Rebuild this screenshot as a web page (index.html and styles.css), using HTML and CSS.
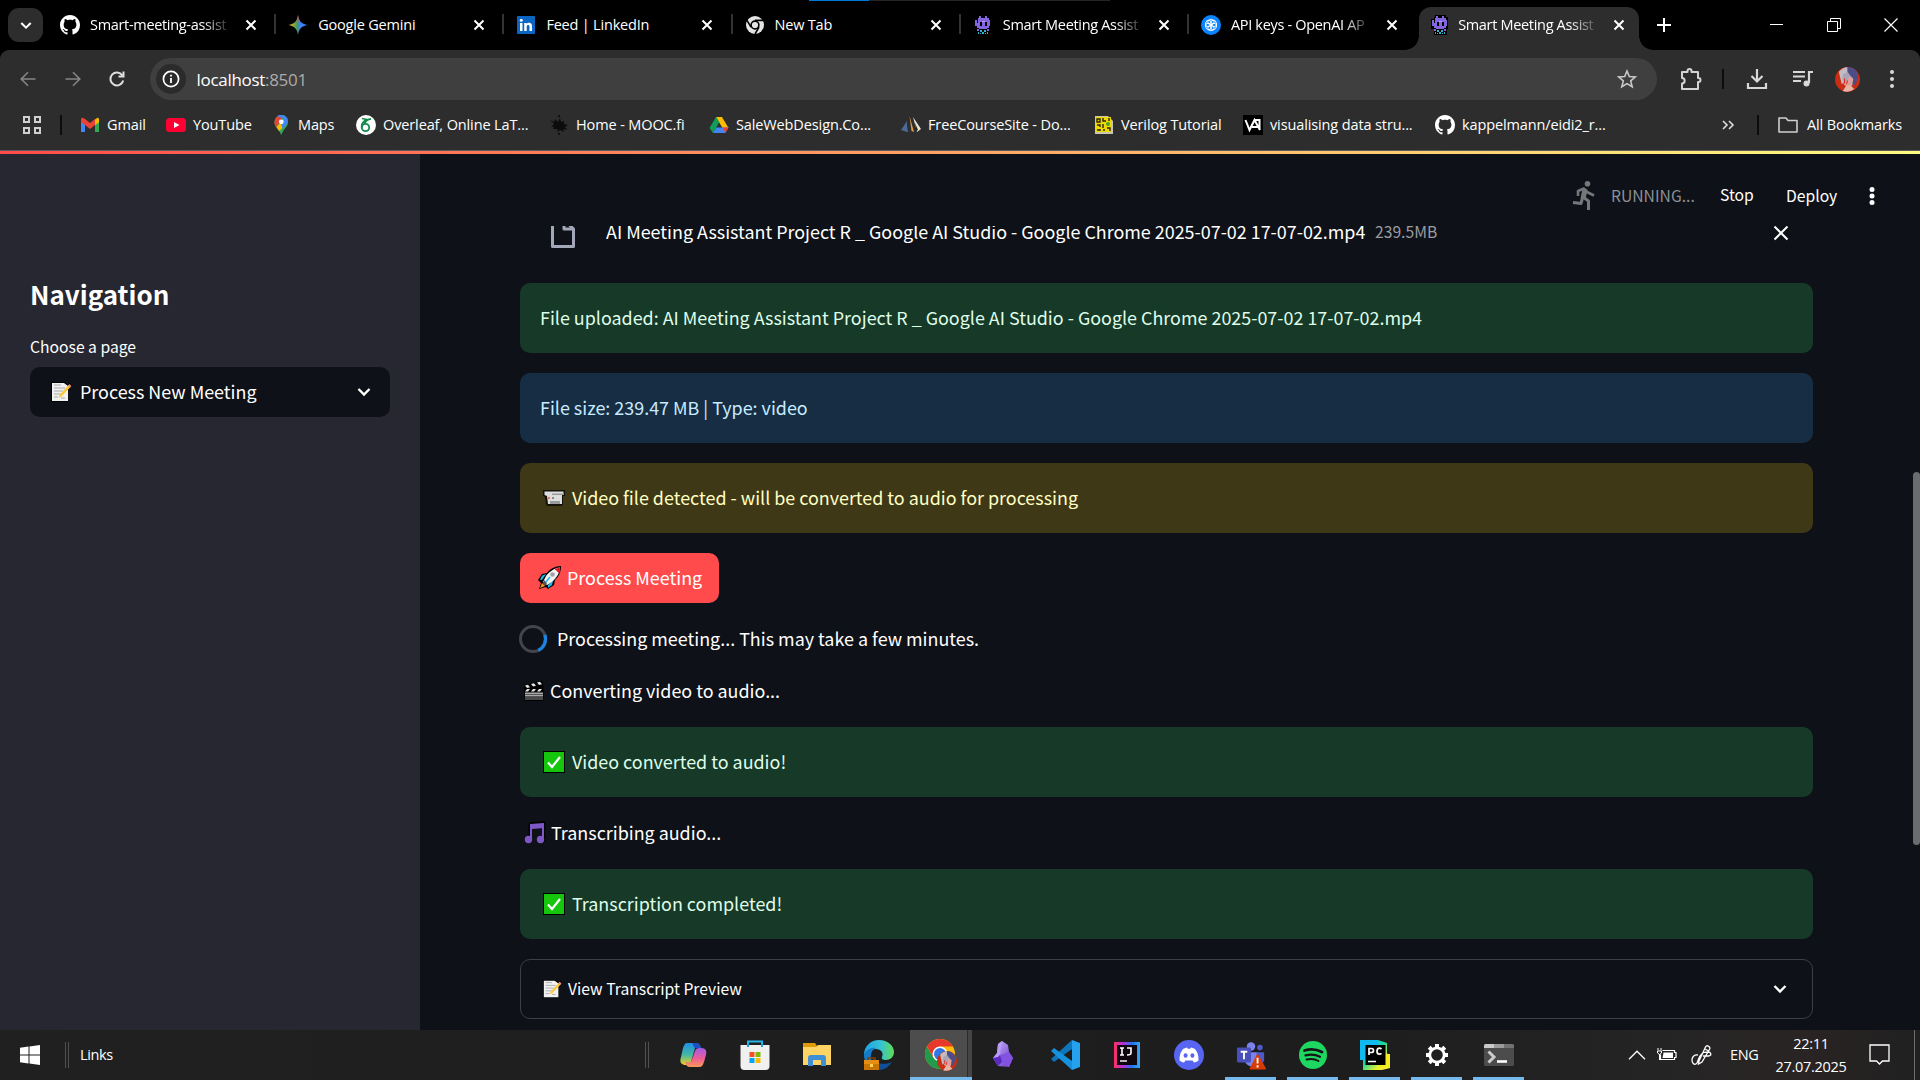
FILE: index.html
```html
<!DOCTYPE html>
<html lang="en">
<head>
<meta charset="utf-8">
<title>Smart Meeting Assistant</title>
<link rel="stylesheet" href="styles.css">
</head>
<body>
<svg class="defs" aria-hidden="true">
  <defs>
    <symbol id="x" viewBox="0 0 12 12"><path d="M1.5 1.5l9 9M10.5 1.5l-9 9" stroke="currentColor" stroke-width="2" fill="none"/></symbol>
    <symbol id="chev" viewBox="0 0 14 10"><path d="M1.5 2l5.500 5.500L12.500 2" stroke="currentColor" stroke-width="2.400" fill="none"/></symbol>
    <symbol id="github" viewBox="0 0 16 16"><path fill="#fff" d="M8 0C3.580 0 0 3.580 0 8c0 3.540 2.290 6.530 5.470 7.590.4.070.550-.170.550-.380 0-.190-.010-.820-.010-1.490-2.010.370-2.530-.490-2.690-.940-.090-.230-.480-.940-.820-1.130-.280-.150-.680-.520-.010-.530.630-.010 1.080.580 1.230.820.720 1.210 1.870.870 2.330.660.070-.520.280-.870.510-1.070-1.780-.2-3.640-.890-3.640-3.950 0-.870.310-1.590.820-2.150-.080-.2-.360-1.020.080-2.120 0 0 .670-.210 2.200.820.640-.180 1.320-.270 2-.270s1.360.090 2 .270c1.530-1.040 2.200-.820 2.200-.820.440 1.100.160 1.920.080 2.120.510.560.820 1.270.820 2.150 0 3.070-1.870 3.750-3.650 3.950.290.250.540.730.540 1.480 0 1.070-.010 1.930-.010 2.200 0 .210.150.460.550.380A8.010 8.010 0 0 0 16 8c0-4.420-3.580-8-8-8z"/></symbol>
    <symbol id="bot" viewBox="0 0 18 20" shape-rendering="crispEdges">
      <path fill="#000" d="M4 0h11v2h2v12h-1v6H3v-6H0V4h3z"/>
      <path fill="#8465e0" d="M5 1h2v2h4V1h2v2h2v2h1v6h-1v2h-2v1H5v-1H3v-2H1V5h2v3h1V3h1z"/>
      <path fill="#000" d="M6 7h2v4H6zM11 7h2v4h-2z"/>
      <path fill="#b49bf0" d="M8 6h3v1H8z"/>
      <path fill="#8465e0" d="M3 14h2v2H3zM13 14h2v2h-2z"/>
      <path fill="#2fb3cf" d="M6 15h2v2H6zM10 15h2v2h-2zM4 17h1v2H4zM8 17h2v2H8zM13 17h1v2h-1zM6 18h1v1H6zM11 18h1v1h-1z"/>
    </symbol>
    <symbol id="memo" viewBox="0 0 22 22">
      <path d="M1 1h14l3 3 2-2 2 2-4 6v11H1z" fill="#000"/>
      <path d="M2 2h12l4 3v15H2z" fill="#f1f1f1"/>
      <path d="M4 4h7M4 7h11M4 10h9M4 13h7M4 16h4M11 17h4" stroke="#aaa" stroke-width="1"/>
      <path d="M8.500 17l1-3 9-10 2 2-9 9.500z" fill="#ffc83d"/><path d="M18 4.500l1.500-1.500 2 2-1.500 1.500z" fill="#e38b8b"/>
    </symbol>
    <symbol id="check" viewBox="0 0 22 22"><path d="M0 0h22v22H0z" fill="#000"/><path d="M1 1h20v20H1z" fill="#16c60c"/><path d="M5 11.500l4 4.500L17 6" stroke="#fff" stroke-width="2.200" fill="none"/></symbol>
    <symbol id="avatar" viewBox="0 0 26 26">
      <circle cx="13" cy="13" r="13" fill="#c92e12"/><path d="M4 5a13 13 0 0 1 9-5v12l-6 6z" fill="#c2bbc2"/><path d="M13 0c7 0 11 5 11 11l-3 8-7-2z" fill="#4d4c87"/><path d="M8 10l5-3 6 5-1 7-4 3-5-4z" fill="#dca198"/><path d="M8 8l5-3 5 7-3-2-3 5-4-1z" fill="#a9a4b5"/><path d="M8 25l4-6h4l4 4a13 13 0 0 1-12 2z" fill="#e5b5aa"/><path d="M10 12v5M13 14l-1 4" stroke="#e01919"/>
    </symbol>
    <linearGradient id="gem" x1="0" x2="1"><stop offset="0" stop-color="#f9bc15"/><stop offset=".45" stop-color="#469a5b"/><stop offset=".6" stop-color="#3b83f6"/><stop offset="1" stop-color="#3186ff"/></linearGradient>
    <linearGradient id="gemTop" x1="0" y1="0" x2="0" y2="1"><stop offset="0" stop-color="#f94543"/><stop offset=".4" stop-color="#f94543" stop-opacity="0"/></linearGradient>
    <linearGradient id="copA" x1="0" y1="0" x2="0" y2="1"><stop offset="0" stop-color="#1c8fe8"/><stop offset=".55" stop-color="#46b9a0"/><stop offset="1" stop-color="#f5d21a"/></linearGradient>
    <linearGradient id="copB" x1="0" y1="0" x2="0" y2="1"><stop offset="0" stop-color="#a25be8"/><stop offset=".55" stop-color="#ee5c97"/><stop offset="1" stop-color="#fb9a54"/></linearGradient>
    <linearGradient id="edgeA" x1="0" x2="1"><stop offset="0" stop-color="#1ca4e6"/><stop offset=".55" stop-color="#35c1d4"/><stop offset="1" stop-color="#62dc54"/></linearGradient>
    <linearGradient id="obs" x1="0" y1="0" x2="1" y2="1"><stop offset="0" stop-color="#c9b2fb"/><stop offset="1" stop-color="#6734c9"/></linearGradient>
    <linearGradient id="ij" x1="0" y1="0" x2="1" y2="0"><stop offset="0" stop-color="#fe315d"/><stop offset=".35" stop-color="#b62ee0"/><stop offset=".7" stop-color="#1b77ef"/><stop offset="1" stop-color="#3aa5ee"/></linearGradient>
    <linearGradient id="pc" x1="0" y1="0" x2="1" y2="1"><stop offset="0" stop-color="#12c8ef"/><stop offset=".45" stop-color="#15d7a0"/><stop offset=".75" stop-color="#e7ee2d"/><stop offset="1" stop-color="#fcf84a"/></linearGradient>
  </defs>
</svg>

<div class="screen">
  <header class="tabs">
    <i class="loadbar"></i>
    <button class="tabsearch"><svg width="12" height="9"><use href="#chev"/></svg></button>
    <div class="tab"><svg class="fav" viewBox="0 0 16 16"><use href="#github"/></svg><span class="title fade">Smart-meeting-assist</span><svg class="close"><use href="#x"/></svg></div>
    <div class="tab"><svg class="fav" viewBox="0 0 20 20"><path d="M10 0c.8 6 3.500 9 9.500 10-6 1-8.700 4-9.500 10C9.200 14 6.500 11 .5 10 6.500 9 9.200 6 10 0z" fill="url(#gem)"/><path d="M10 0c.8 6 3.500 9 9.500 10-6 1-8.700 4-9.500 10C9.200 14 6.500 11 .5 10 6.500 9 9.200 6 10 0z" fill="url(#gemTop)"/></svg><span class="title">Google Gemini</span><svg class="close"><use href="#x"/></svg></div>
    <div class="tab"><svg class="fav" viewBox="0 0 20 20"><rect x="1" y="1" width="18" height="18" rx="1" fill="#0a66c2"/><path d="M4 8h2.500v8H4zM8.200 8h2.400v1.100c1-1.800 5.400-2 5.400 2V16h-2.500v-4.300c0-2.300-2.800-2-2.800 0V16H8.200z" fill="#fff"/><circle cx="5.250" cy="5.300" r="1.500" fill="#fff"/></svg><span class="title">Feed | LinkedIn</span><svg class="close"><use href="#x"/></svg></div>
    <div class="tab"><svg class="fav" viewBox="0 0 20 20"><circle cx="10" cy="10" r="9" fill="#e4e4e4"/><circle cx="10" cy="10" r="3.900" fill="#e4e4e4" stroke="#000" stroke-width="1.600"/><path d="M10 5.400h8.200M6 12.200L2 5.300M14 12.200L10 19" stroke="#000" stroke-width="1.600"/></svg><span class="title">New Tab</span><svg class="close"><use href="#x"/></svg></div>
    <div class="tab"><svg class="fav" viewBox="0 0 18 20"><use href="#bot"/></svg><span class="title fade">Smart Meeting Assist</span><svg class="close"><use href="#x"/></svg></div>
    <div class="tab last"><svg class="fav" viewBox="0 0 20 20"><circle cx="10" cy="10" r="10" fill="#0a84ff"/><g fill="none" stroke="#fff" stroke-width=".9"><ellipse cx="10" cy="7" rx="3.200" ry="2.700"/><ellipse cx="10" cy="7" rx="3.200" ry="2.700" transform="rotate(60 10 10)"/><ellipse cx="10" cy="7" rx="3.200" ry="2.700" transform="rotate(120 10 10)"/><ellipse cx="10" cy="7" rx="3.200" ry="2.700" transform="rotate(180 10 10)"/><ellipse cx="10" cy="7" rx="3.200" ry="2.700" transform="rotate(240 10 10)"/><ellipse cx="10" cy="7" rx="3.200" ry="2.700" transform="rotate(300 10 10)"/></g></svg><span class="title fade">API keys - OpenAI AP</span><svg class="close"><use href="#x"/></svg></div>
    <div class="tab active"><svg class="fav" viewBox="0 0 18 20"><use href="#bot"/></svg><span class="title fade">Smart Meeting Assist</span><svg class="close"><use href="#x"/></svg></div>
    <svg class="plus" viewBox="0 0 14 14"><path d="M7 0v14M0 7h14" stroke="#fff" stroke-width="2"/></svg>
    <div class="winctl">
      <svg width="14" height="14"><path d="M0 6.500h13" stroke="#fff"/></svg>
      <svg width="14" height="14"><path d="M.5 3.500h10v10H.500zM3.500 3.500V.500h10v10h-3" fill="none" stroke="#fff"/></svg>
      <svg width="14" height="14"><path d="M.5.500l13 13M13.500.500l-13 13" stroke="#fff" stroke-width="1.200"/></svg>
    </div>
  </header>

  <div class="toolbar">
    <svg class="nav dim" viewBox="0 0 16 16"><path d="M15.500 8H1.500M8 1.200L1.200 8 8 14.800"/></svg>
    <svg class="nav dim" viewBox="0 0 16 16"><path d="M.5 8h14M8 1.200L14.800 8 8 14.800"/></svg>
    <svg class="nav" viewBox="0 0 16 16"><path d="M14.200 9.500a6.500 6.500 0 1 1-.9-5.200M14.500.5v5H9.500" /></svg>
    <div class="omnibox">
      <span class="info"><svg width="18" height="18"><circle cx="9" cy="9" r="7.600" fill="none" stroke="#fff" stroke-width="1.700"/><path d="M9 8v5M9 4.800v1.800" stroke="#fff" stroke-width="1.800"/></svg></span>
      <span class="url">localhost<b>:8501</b></span>
      <svg class="star" viewBox="0 0 20 20"><path d="M10 2l2.300 5.500 6 .5-4.600 3.900 1.500 5.900L10 14.600l-5.200 3.200 1.500-5.900L1.700 8l6-.5z" fill="none" stroke="#c9c9c9" stroke-width="1.600"/></svg>
    </div>
    <div class="actions">
      <svg class="ext" viewBox="0 0 24 24"><path d="M3 5h5.500V4a2 2 0 0 1 4 0v1H19v6h.5a2 2 0 0 1 0 4H19v7H3v-5.500c3.500 0 3.500-5.500 0-5.500z" fill="none" stroke="#d4d4d4" stroke-width="2" stroke-linejoin="round"/></svg>
      <i class="bar"></i>
      <svg class="down" viewBox="0 0 22 22"><path d="M11 1v12M5.500 8l5.500 5.500L16.500 8M2 15v5h18v-5" fill="none" stroke="#d8d8d8" stroke-width="2.200"/></svg>
      <svg class="media" viewBox="0 0 20 18"><path d="M0 2h12M0 6.500h12M0 11h8M20 2h-4v11" fill="none" stroke="#d8d8d8" stroke-width="2.200"/><circle cx="13.500" cy="13.500" r="3" fill="#d8d8d8"/></svg>
      <svg class="ava" viewBox="0 0 26 26"><use href="#avatar"/></svg>
      <svg class="kebab" viewBox="0 0 6 20"><g fill="#d8d8d8"><circle cx="3" cy="3" r="2"/><circle cx="3" cy="10" r="2"/><circle cx="3" cy="17" r="2"/></g></svg>
    </div>
  </div>

  <nav class="bookmarks">
    <svg class="apps" viewBox="0 0 20 20"><path d="M2 2h5v5H2zM13 2h5v5h-5zM2 13h5v5H2zM13 13h5v5h-5z" fill="none" stroke="#d0d0d0" stroke-width="2"/></svg>
    <i class="bar"></i>
    <a class="bm b1"><svg viewBox="0 0 20 20"><path d="M1 4v13h4V9z" fill="#4285f4"/><path d="M15 9v8h4V4z" fill="#34a853"/><path d="M1 4l1-1.500 3 1.500 5 4 5-4v6l-5 4-5-4-4-3z" fill="#ea4335"/><path d="M15 4.500L18 2.500l1 1.500v3.500L15 10z" fill="#fbbc04"/></svg><span>Gmail</span></a>
    <a class="bm b2"><svg viewBox="0 0 20 20"><rect y="3" width="20" height="14" rx="3.500" fill="#ff0033"/><path d="M8 7l5.500 3L8 13z" fill="#fff"/></svg><span>YouTube</span></a>
    <a class="bm b3"><svg viewBox="0 0 20 20"><path d="M3.500 8C3 3 7 0 10.500 0c4 0 7 3.500 6.500 7.500L10 20C9 15 4 13 3.500 8z" fill="#34a853"/><path d="M3.500 8c0-4 3-8 7-8l2 1-7 11C4.300 10.500 3.500 9.500 3.500 8z" fill="#ea4335"/><path d="M5.500 12L14 3l2 6-8 7z" fill="#fbbc04"/><path d="M10.500 0c4 0 7 3.500 6.500 7.500L12 15l-2-6 3-5-7-3c1-.6 2.500-1 4.500-1z" fill="#4285f4"/><path d="M10 19.500c0-4 2-6 5-9l2-4c.3 6-5 7-7 13z" fill="#34a853"/><circle cx="10.300" cy="6.800" r="2.400" fill="#fff"/></svg><span>Maps</span></a>
    <a class="bm b4"><svg viewBox="0 0 20 20"><circle cx="10" cy="10" r="10" fill="#fff"/><circle cx="9.500" cy="12.500" r="3.700" fill="none" stroke="#138a4d" stroke-width="1.800"/><path d="M5.800 13C5 8 8 4.500 15 4c-3 .3-5.500 2.500-6.500 4.500M6 3.500l5 1" fill="none" stroke="#138a4d" stroke-width="1.700"/></svg><span>Overleaf, Online LaT...</span></a>
    <a class="bm b5"><svg viewBox="0 0 20 20"><path d="M1 5l4 2 1-3 3 3 2-4 1 4 3-1v3l4 1-3 2 2 3-4-1 1 3-4-2-2 2-1-3-4 0 1-2-3 0 3-3z" fill="#0c0c0c"/><circle cx="10" cy="1.200" r="1.100" fill="#0c0c0c"/><circle cx="10" cy="18.800" r="1.100" fill="#0c0c0c"/></svg><span>Home - MOOC.fi</span></a>
    <a class="bm b6"><svg viewBox="0 0 20 20"><path d="M7 2h6l6.500 11h-6z" fill="#fbbc04"/><path d="M7 2l3.200 5.300L4 18 .5 13z" fill="#0f9d58"/><path d="M7.200 12.500h12.300L16.300 18H4z" fill="#4285f4"/><path d="M13.500 12.500h6L16.300 18z" fill="#ea4335"/></svg><span>SaleWebDesign.Co...</span></a>
    <a class="bm b7"><svg viewBox="0 0 20 20"><path d="M6 6v11L0 15zM7 11v6h-1z" fill="#4a6b9a"/><path d="M8.500 1l4.500 16-2.500-1z" fill="#e79b45"/><path d="M12 2l8 12-4 3z" fill="#e8e1cf"/><path d="M14 8l3 7-2 1z" fill="#222"/></svg><span>FreeCourseSite - Do...</span></a>
    <a class="bm b8"><svg viewBox="0 0 20 20"><path d="M1 1h13l5 5v13H1z" fill="#c6c6b4"/><path d="M1 2h16v15H1z" fill="#f0d900"/><path d="M3 4h3v3H3zM9 3v3h3M15 3v3M3 10h3v2M3 15h4M9 9v4M9 15h2M13 13h3v3" fill="none" stroke="#252510" stroke-width="1.400"/><circle cx="14" cy="9" r="2" fill="#41a436"/></svg><span>Verilog Tutorial</span></a>
    <a class="bm b9"><svg viewBox="0 0 20 20"><path d="M0 0h20v20H0z" fill="#000"/><path d="M2.500 5l4 10 5-10 5.500 10M9 12h6M16.500 15V5l-4.500 0" fill="none" stroke="#fff" stroke-width="2"/></svg><span>visualising data stru...</span></a>
    <a class="bm b10"><svg viewBox="0 0 16 16"><use href="#github"/></svg><span>kappelmann/eidi2_r...</span></a>
    <svg class="more" viewBox="0 0 12 10"><path d="M1 1l4 4-4 4M7 1l4 4-4 4" fill="none" stroke="#ddd" stroke-width="1.600"/></svg>
    <i class="bar"></i>
    <a class="bm all"><svg viewBox="0 0 20 20"><path d="M1 3h7l2 2.500h9V17H1z" fill="none" stroke="#cfcfcf" stroke-width="1.600" stroke-linejoin="round"/></svg><span>All Bookmarks</span></a>
  </nav>
  <div class="decoration"></div>

  <div class="app">
    <aside class="sidebar">
      <h2>Navigation</h2>
      <label>Choose a page</label>
      <div class="select"><svg class="emoji" viewBox="0 0 22 22"><use href="#memo"/></svg><span>Process New Meeting</span><svg class="chev" viewBox="0 0 14 10"><use href="#chev"/></svg></div>
    </aside>
    <main class="main">
      <div class="apphead">
        <svg class="runner" viewBox="0 0 22 29"><g fill="none" stroke="#76777a" stroke-width="3" stroke-linejoin="round"><path d="M5 15V10l6-2.500 3 3.500 7 3.500" stroke-width="2.600"/><path d="M0 21.500l8 1 3.500-13" stroke-width="3"/><path d="M10 16l5.500 4v9" /><path d="M12 8l-2 10" stroke-width="5"/></g><circle cx="14.500" cy="2.800" r="2.800" fill="#76777a"/></svg>
        <span class="running">RUNNING...</span><span class="stop">Stop</span><span class="deploy">Deploy</span>
        <svg class="dots" viewBox="0 0 6 18"><g fill="#fff"><circle cx="3" cy="2.600" r="2.500"/><circle cx="3" cy="9" r="2.500"/><circle cx="3" cy="15.400" r="2.500"/></g></svg>
      </div>
      <div class="scroll">
        <div class="content">
          <div class="file">
            <svg class="page" viewBox="0 0 24 30"><path d="M1.500 1.500H13l9.500 9.500v17.500h-21zM13 1.500V11h9.500" fill="none" stroke="#a3a8b8" stroke-width="3" stroke-linejoin="round"/></svg>
            <span class="fname">AI Meeting Assistant Project R _ Google AI Studio - Google Chrome 2025-07-02 17-07-02.mp4</span><span class="fsize">239.5MB</span>
            <svg class="fx" viewBox="0 0 16 16"><path d="M1.500 1.500l13 13M14.500 1.500l-13 13" stroke="#fff" stroke-width="2"/></svg>
          </div>
          <div class="alert ok"><span class="long">File uploaded: AI Meeting Assistant Project R _ Google AI Studio - Google Chrome 2025-07-02 17-07-02.mp4</span></div>
          <div class="alert size">File size: 239.47 MB | Type: video</div>
          <div class="alert warn"><svg class="emoji" viewBox="0 0 22 22"><path d="M0 3h22v6h-2v9l-2 1H4l-1-2-1-7-2-1z" fill="#15120a"/><path d="M1.500 4.500h19V8H19v9H5L4 9l-2.500-1z" fill="#ddd"/><path d="M9 6.500h12V8H9zM7 14h10v3H7z" fill="#9b9b9b"/><path d="M5 10h2v2H5z" fill="#e07b5b"/><path d="M9 10h2v2H9z" fill="#888"/></svg>Video file detected - will be converted to audio for processing</div>
          <button class="go"><svg class="emoji" viewBox="0 0 24 24"><path d="M23 0c-6 0-11 3-14 7L4 8 0 14l3 3-2 6 7-2 2 2 6-4 1-5c4-4 6-8 6-14z" fill="#000"/><path d="M4 9.500l4-1.500-4 6H2zM15 15l-1 4-4 3v-3z" fill="#1fb6e8"/><path d="M22 1.500C16 2 11 6 8 10l-3 6 4 3 5-3c4-4 7.500-8 8-14.500z" fill="#f2f5f7"/><path d="M22 1.500l-5.500 1.500 5 4.500z" fill="#e81224"/><circle cx="14.500" cy="8.500" r="2.300" fill="#a0a4a8"/><path d="M6 14l3 3-2 3-2-2z" fill="#555"/><path d="M12 11l-4 5" stroke="#29b7e8" stroke-width="1.500"/><path d="M4 17l3 3-5 2z" fill="#f7941d"/></svg>Process Meeting</button>
          <div class="spin"><svg width="28" height="28"><circle cx="14" cy="14" r="12.500" fill="none" stroke="#42454b" stroke-width="3"/><path d="M25.800 9.800A12.500 12.500 0 0 1 19.300 25.300" fill="none" stroke="#1c83e1" stroke-width="3.200"/></svg><span>Processing meeting... This may take a few minutes.</span></div>
          <div class="step s1"><svg class="emoji" viewBox="0 0 22 22"><path d="M0 5l18-4.500L19.500 5v16H.500z" fill="#000"/><path d="M1 5.500l3-.8 2 2.500-3 .8zM7 4l3-.8 2 2.500-3 .8zM13 2.500l3-.8 2 2.500-3 .8zM3 9h3L4 11.500H1zM9 9h3l-2 2.500H7zM15 9h3l-2 2.500h-3z" fill="#e3e3e3"/><path d="M1 12.500h18v4H1z" fill="#a9a9a9"/><path d="M1 14.500h18" stroke="#555"/><path d="M1 17h18v3H1z" fill="#4a4a4a"/></svg>Converting video to audio...</div>
          <div class="alert ok"><svg class="emoji" viewBox="0 0 22 22"><use href="#check"/></svg>Video converted to audio!</div>
          <div class="step s2"><svg class="emoji" viewBox="0 0 22 22"><path d="M5.800 1.500L20 .5v17.500h-3M5.800 1.500v16.500" stroke="#000" stroke-width="2.500" fill="none"/><path d="M6 2l14-1v5L8 7v11H6z" fill="#7d58c6"/><path d="M18 5h2v12h-2z" fill="#7d58c6"/><circle cx="4.500" cy="17.500" r="3.700" fill="#7d58c6"/><circle cx="16.500" cy="17.500" r="3.700" fill="#7d58c6"/></svg>Transcribing audio...</div>
          <div class="alert ok"><svg class="emoji" viewBox="0 0 22 22"><use href="#check"/></svg>Transcription completed!</div>
          <div class="expander"><svg class="emoji" viewBox="0 0 22 22"><use href="#memo"/></svg><span>View Transcript Preview</span><svg class="chev" viewBox="0 0 14 10"><use href="#chev"/></svg></div>
        </div>
        <div class="track"><i class="thumb"></i></div>
      </div>
    </main>
  </div>

  <footer class="taskbar">
    <svg class="win" viewBox="0 0 20 20"><path d="M0 2.800L8.500 1.600V9.500H0zM9.500 1.500L20 0v9.500H9.500zM0 10.500h8.500v7.900L0 17.200zM9.500 10.500H20V20L9.500 18.500z" fill="#fff"/></svg>
    <i class="grip"></i><span class="links">Links</span><i class="grip g2"></i>
    <div class="appsrow">
      <div class="ti"><svg viewBox="0 0 30 30"><path d="M9 3h9c3 0 4 2 5 5h-6l-4 14c-1 3-3 3-5 3-4 0-7-2-5-8l2-9c1-3 2-5 4-5z" fill="url(#copA)"/><path d="M14 3h4c3 0 4 2 5 5h-6c-1 0-2-4-3-5z" fill="#1c4fc4"/><path d="M21 27h-9c-3 0-4-2-5-5h6l4-11c1-3 3-3 6-3 5 0 6 3 5 7l-2 7c-1 3-2 5-5 5z" fill="url(#copB)"/></svg></div>
      <div class="ti"><svg viewBox="0 0 30 30"><path d="M8 6V1.500h14V6" fill="none" stroke="#27b3ea" stroke-width="2"/><path d="M.5 5h29v21q0 4-4 4h-21q-4 0-4-4z" fill="#f0f0f0"/><path d="M9.500 12h5v5h-5z" fill="#f25022"/><path d="M15.500 12h5v5h-5z" fill="#7fba00"/><path d="M9.500 18h5v5h-5z" fill="#00a4ef"/><path d="M15.500 18h5v5h-5z" fill="#ffb900"/><path d="M7 4h2v3H7zM21 4h2v3h-2z" fill="#1f9fd8"/></svg></div>
      <div class="ti"><svg viewBox="0 0 30 30"><path d="M1 3h12l2 3v5H1z" fill="#e09b0a"/><path d="M1 7h13l2-2h13v20H1z" fill="#ffd465"/><path d="M6 26v-8q0-3 3-3h12q3 0 3 3v8h-5v-6h-8v6z" fill="#3e8fd6"/></svg></div>
      <div class="ti"><svg viewBox="0 0 30 30"><path d="M0 15C0 6 7 0 15 0c9 0 15 6 15 12 0 5-4 8-8 8-3 0-5-1-4-3 2-4-1-8-6-8-7 0-10 5-12 6z" fill="url(#edgeA)"/><path d="M0 15c2-5 7-8 12-7-5 2-7 9-3 15l2 6C4 27 0 22 0 15z" fill="#147bc8"/><path d="M9 18c2 5 10 8 19 4-3 5-8 8-13 8-4-1-7-6-6-12z" fill="#114f98"/><path d="M0 20h15v10H0z" fill="#c87407"/><path d="M0 20h15v4H0z" fill="#e48d12"/><path d="M4 20v-2h7v2" fill="none" stroke="#7b4103" stroke-width="1.500"/><path d="M6 24h3v3H6z" fill="#ffd34f"/></svg></div>
      <div class="ti on cur"><svg viewBox="0 0 32 32"><circle cx="15" cy="15" r="15" fill="#fbbd0a"/><path d="M15 15l-6.500 4L2 7.500A15 15 0 0 0 15 30l6-11z" fill="#229a4b"/><path d="M15 7.500h13A15 15 0 0 0 2 7.500l6.500 11.200z" fill="#e8382c"/><circle cx="15" cy="15" r="7.500" fill="#fff"/><circle cx="15" cy="15" r="6" fill="#2d78e6"/><g transform="translate(12 12) scale(.77)"><use href="#avatar" width="26" height="26"/></g></svg></div>
      <div class="ti"><svg viewBox="0 0 30 30"><path d="M14 1l6 4 1 7 4 6-4 9-11-1-5-8 4-5 1-9z" fill="url(#obs)"/><path d="M14 1l-2 13-2 3-5 1 4-5 1-9z" fill="#b79bf5"/><path d="M5 18l5-1 2-2 3 6-5 5z" fill="#5b2ac0"/><path d="M12 15l9-3 4 6-4 9-7-5z" fill="#8352e0"/></svg></div>
      <div class="ti"><svg viewBox="0 0 30 30"><path d="M22 0L1 19l3 3 18-13z" fill="#0e75bb"/><path d="M22 30L1 11l3-3 18 13z" fill="#1691dc"/><path d="M22 0l8 3v24l-8 3z" fill="#25a1f0"/></svg></div>
      <div class="ti"><svg viewBox="0 0 30 30"><path d="M2 2h26v26H2z" fill="url(#ij)"/><path d="M5 5h20v20H5z" fill="#10060f"/><path d="M8 8h4M10 8v7M8 15h4M15 8h4v5q0 2-4 2" fill="none" stroke="#fff" stroke-width="1.600"/><path d="M8 21h7" stroke="#fff" stroke-width="1.400"/></svg></div>
      <div class="ti"><svg viewBox="0 0 30 30"><circle cx="15" cy="15" r="15" fill="#5865f2"/><path d="M9 9q3-1.600 4-1.500l.8 1.200h2.400L17 7.500q1 0 4 1.500 4 5 3.500 11.500-2.500 2-4.500 2l-1.500-2h-7l-1.500 2q-2 0-4.500-2Q5 14 9 9z" fill="#fff"/><ellipse cx="11.600" cy="15.500" rx="2" ry="2.200" fill="#5865f2"/><ellipse cx="18.400" cy="15.500" rx="2" ry="2.200" fill="#5865f2"/></svg></div>
      <div class="ti on"><svg viewBox="0 0 32 30"><circle cx="16" cy="6" r="4.500" fill="#7b83eb"/><circle cx="25.500" cy="7" r="3" fill="#5059c9"/><path d="M9 12h14v12q-2 4-8 3-6-2-6-8z" fill="#7b83eb"/><path d="M22 12h8v9q-2 4-8 4z" fill="#5059c9"/><rect x="1" y="7" width="15" height="16" rx="1.500" fill="#4950b9"/><path d="M5 11.500h7M8.500 11.500v8" stroke="#fff" stroke-width="2"/><path d="M23 13l9 16.500q0 1-1 1H15q-1-.500 0-2z" fill="#d83b01"/><path d="M23 18v6M23 26v2.200" stroke="#fff" stroke-width="2"/></svg></div>
      <div class="ti on"><svg viewBox="0 0 30 30"><circle cx="15" cy="15" r="14" fill="#1ed760"/><g fill="none" stroke="#141414" stroke-linecap="round"><path d="M6.500 10.500q9-2.800 17.500 1.500" stroke-width="2.800"/><path d="M7.500 15.300q8-2 14.500 1.500" stroke-width="2.300"/><path d="M8.500 19.500q7-1.500 12 1.500" stroke-width="1.900"/></g></svg></div>
      <div class="ti on"><svg viewBox="0 0 30 30"><path d="M0 0h18l9 3v10l3 5v10l-8 2H3V20H0z" fill="url(#pc)"/><path d="M0 0h18l1 6-12 5v9H0z" fill="#10b9f0"/><path d="M30 14v13l-10 2 6-15z" fill="#f6ed20"/><path d="M5.500 5h20v20h-20z" fill="#000"/><path d="M9 15V8.500h2.500q2 0 2 2t-2 2H9M21.500 9q-1-.800-2-.800-2.500 0-2.500 3t2.500 3q1 0 2-.8" fill="none" stroke="#fff" stroke-width="1.700"/><path d="M8 21.500h8" stroke="#fff" stroke-width="1.500"/></svg></div>
      <div class="ti on"><svg viewBox="0 0 30 30"><circle cx="15" cy="15" r="7.200" fill="none" stroke="#fff" stroke-width="2.800"/><g stroke="#fff" stroke-width="4"><path d="M15 8V4"/><path d="M15 8V4" transform="rotate(45 15 15)"/><path d="M15 8V4" transform="rotate(90 15 15)"/><path d="M15 8V4" transform="rotate(135 15 15)"/><path d="M15 8V4" transform="rotate(180 15 15)"/><path d="M15 8V4" transform="rotate(225 15 15)"/><path d="M15 8V4" transform="rotate(270 15 15)"/><path d="M15 8V4" transform="rotate(315 15 15)"/></g></svg></div>
      <div class="ti on"><svg viewBox="0 0 30 30"><rect y="4" width="30" height="22" rx="1.500" fill="#4c4c4c"/><path d="M0 8V5.500Q0 4 1.500 4H10v4z" fill="#c9c9c9"/><path d="M10 4h10v4H10z" fill="#9b9b9b"/><path d="M20 4h8.500Q30 4 30 5.500V8H20z" fill="#727272"/><path d="M4.500 11.500L10 17l-5.500 5.500" fill="none" stroke="#ccc" stroke-width="3"/><path d="M13 21.500h10" stroke="#fff" stroke-width="2.600"/></svg></div>
    </div>
    <div class="tray">
      <svg class="up" viewBox="0 0 18 10"><path d="M1 9.200L9 1.200l8 8" fill="none" stroke="#fff" stroke-width="1.300"/></svg>
      <svg class="bat" viewBox="0 0 20 14"><path d="M5.500 2.500h12v2h1.500v5h-1.500v2h-14v-5" fill="none" stroke="#fff" stroke-width="1.200"/><path d="M6.500 4.500h9.500v5.500H5.500z" fill="#fff"/><path d="M1 0v2.500M4 0v2.500M.5 3h4v2l-2 1.500L.5 5zM2.500 6v6" fill="none" stroke="#fff"/></svg>
      <svg class="pen" viewBox="0 0 22 22"><path d="M8 17L14.500 3q1-2 3-.800t1.200 2.800L11 18l-3.500 2zM7 11c-4-.5-6 2-6 5s2 5 4 4 1.500-4 4-8 5-4 8-4 4 3 1 4h-6M14 5l3.500 2" fill="none" stroke="#fff" stroke-width="1.300"/></svg>
      <span class="lang">ENG</span>
      <div class="clock"><span>22:11</span><span>27.07.2025</span></div>
      <svg class="note" viewBox="0 0 22 22"><path d="M1 1h19v16h-6.500L10.500 20l-3-3H1z" fill="none" stroke="#fff" stroke-width="1.300"/></svg>
      <i class="edge"></i>
    </div>
  </footer>
</div>
</body>
</html>
```
FILE: styles.css
```css
* { box-sizing: border-box; }
body { margin: 0; background: #000; overflow: hidden; font-family: "Open Sans", "Noto Sans", sans-serif; color: #fff; }
.defs { position: absolute; width: 0; height: 0; }
svg { display: block; flex: none; overflow: visible; }
button { border: 0; padding: 0; color: inherit; font: inherit; }
.screen { width: 1920px; height: 1080px; display: flex; flex-direction: column; }

/* tab strip */
.tabs { position: relative; height: 50px; flex: none; display: flex; align-items: center; background: #000; padding-left: 8px; }
.loadbar { position: absolute; left: 809px; top: 0; width: 301px; height: 1px; background: linear-gradient(90deg, #0078d7 60px, #252525 60px); }
.tabsearch { width: 35px; height: 34px; border-radius: 11px; background: #2d2d2d; display: flex; align-items: center; justify-content: center; margin-right: 4px; }
.tab { width: 228.200px; height: 50px; flex: none; display: flex; align-items: center; padding-left: 13px; position: relative; }
.tab::after { content: ""; position: absolute; right: -1px; top: 14px; width: 2px; height: 20px; background: #333; }
.tab.last::after, .tab.active::after { display: none; }
.fav { width: 20px; height: 20px; }
.title { width: 144px; margin-left: 10px; overflow: hidden; white-space: nowrap; font-size: 14.500px; letter-spacing: -.2px; line-height: 24px; }
.fade { letter-spacing: -.32px; -webkit-mask-image: linear-gradient(90deg, #000 112px, transparent 142px); mask-image: linear-gradient(90deg, #000 112px, transparent 142px); }
.close { width: 12px; height: 12px; margin-left: 11px; }
.active { width: 220px; height: 43px; align-self: flex-end; margin-left: 3px; background: #2d2d2d; border-radius: 12px 12px 0 0; padding-left: 11px; padding-bottom: 7px; }
.active .title { margin-left: 8px; }
.active::before { content: ""; position: absolute; left: -14px; right: -14px; bottom: 0; height: 14px; background: radial-gradient(circle at 0 0, transparent 13.500px, #2d2d2d 14px) left / 14px 14px no-repeat, radial-gradient(circle at 100% 0, transparent 13.500px, #2d2d2d 14px) right / 14px 14px no-repeat; }
.plus { width: 14px; height: 14px; margin-left: 18px; }
.winctl { margin-left: auto; display: flex; gap: 43px; margin-right: 22px; }

/* address row */
.toolbar { height: 54px; flex: none; display: flex; align-items: center; background: #2d2d2d; padding: 4px 0 0 20px; border-radius: 9px 9px 0 0; }
.nav { width: 16px; height: 16px; margin-right: 28.500px; fill: none; stroke: #dedede; stroke-width: 2; }
.dim { stroke: #858585; stroke-width: 1.600; }
.omnibox { width: 1507px; height: 42px; margin-left: -4px; border-radius: 21px; background: #3f3f3f; display: flex; align-items: center; padding-left: 6px; }
.info { width: 30px; height: 30px; border-radius: 50%; background: #2b2b2b; display: flex; align-items: center; justify-content: center; }
.url { margin-left: 11px; font-size: 17px; letter-spacing: -.3px; line-height: 24px; padding-top: 1px; }
.url b { font-weight: 400; color: #ababab; }
.star { width: 20px; height: 20px; margin-left: auto; margin-right: 20px; }
.actions { display: flex; align-items: center; flex: none; }
.ext { width: 24px; height: 24px; margin-left: 22px; }
.bar { width: 2px; height: 20px; background: #0c0c0c; flex: none; }
.actions .bar { margin-left: 19px; }
.down { width: 22px; height: 22px; margin-left: 22px; }
.media { width: 20px; height: 18px; margin-left: 25px; }
.ava { width: 25px; height: 25px; margin-left: 22px; }
.kebab { width: 6px; height: 20px; margin-left: 29px; }

/* bookmarks row */
.bookmarks { height: 47px; flex: none; display: flex; align-items: center; background: #2d2d2d; border-bottom: 1px solid #5c5c5c; padding: 0 0 4px 22px; }
.apps { width: 20px; height: 20px; }
.bookmarks .bar { margin-left: 18px; }
.bm { display: flex; align-items: center; flex: none; white-space: nowrap; font-size: 14.500px; letter-spacing: -.12px; }
.bm svg { width: 20px; height: 20px; margin-right: 7px; }
.bm span { line-height: 22px; }
.b1 { width: 86px; margin-left: 18px; }
.b2 { width: 105px; }
.b3 { width: 85px; }
.b4 { width: 193px; }
.b5 { width: 160px; }
.b6 { width: 192px; }
.b7 { width: 193px; }
.b8 { width: 149px; }
.b9 { width: 192px; }
.b10 { width: 287px; }
.more { width: 12px; height: 10px; }
.bookmarks .more + .bar { margin-left: 23px; }
.all { margin-left: 19px; }
.all svg { margin-right: 9px; }
.decoration { height: 3px; flex: none; background: linear-gradient(90deg, #ff4b4b, #fffd80); }

/* application */
.app { height: 876px; flex: none; display: flex; font-family: "Noto Sans CJK SC", "Noto Sans", sans-serif; font-size: 17.920px; overflow: hidden; }
.sidebar { width: 420px; background: #262730; padding: 120px 30px 0; flex: none; }
.sidebar h2 { margin: 0; font-size: 26px; line-height: 40px; font-weight: 700; }
.sidebar label { display: block; margin-top: 23px; font-size: 15.700px; line-height: 20px; }
.select { height: 50px; margin-top: 10px; border-radius: 10px; background: #0e1117; display: flex; align-items: center; padding: 0 19px 2px 20px; }
.select span, .expander span { flex: 1; }
.emoji { width: 22px; height: 22px; margin-right: 8px; margin-top: 2px; }
.chev { width: 14px; height: 10px; margin-top: 1px; }
.main { flex: 1; background: #0e1117; display: flex; flex-direction: column; }
.apphead { height: 72px; flex: none; display: flex; align-items: center; padding: 11px 0 0 1153px; font-size: 15.700px; line-height: 24px; }
.runner { width: 22px; height: 29px; }
.running { width: 108px; margin-left: 16px; color: #8d8f94; }
.stop { width: 66px; margin-left: 1px; padding-bottom: 1px; }
.deploy { width: 83px; }
.dots { width: 6px; height: 18px; }
.scroll { height: 804px; display: flex; overflow: hidden; }
.content { width: 1293px; margin-left: 100px; flex: none; display: flex; flex-direction: column; }
.file { height: 30px; margin: -8px 0 0 31px; display: flex; align-items: center; flex: none; white-space: nowrap; }
.page { width: 24px; height: 30px; }
.fname { width: 759px; margin-left: 31px; padding-bottom: 4px; }
.fsize { font-size: 15.700px; color: #9a9ca1; margin-left: 10px; padding-bottom: 3px; }
.fx { width: 16px; height: 16px; margin-left: auto; margin-right: 24px; }
.alert { height: 70px; flex: none; border-radius: 10px; display: flex; align-items: center; padding: 0 0 2px 20px; margin-bottom: 20px; line-height: 26px; }
.alert .emoji { margin: 2px 7px 0 3px; }
.file + .alert { margin-top: 35px; }
.ok { background: #173928; color: #dffde9; }
.size { background: #172d43; color: #c7ebff; }
.warn { background: #3e3816; color: #ffffc2; }
.go { width: 199px; height: 50px; flex: none; border-radius: 10px; background: #ff4b4b; display: flex; align-items: center; padding: 0 0 2px 18px; }
.go .emoji { width: 24px; height: 24px; margin-right: 5px; }
.spin { height: 30px; margin: 21px 0 0 -1px; display: flex; align-items: center; gap: 10px; flex: none; }
.spin span { padding-bottom: 2px; }
.step { height: 30px; flex: none; display: flex; align-items: center; padding: 0 0 2px 4px; }
.s1 { margin: 22px 0 21px; }
.s2 { margin: 1px 0 21px; }
.step .emoji { margin-right: 5px; }
.s1 .emoji { margin-right: 4px; }
.expander { height: 60px; flex: none; border: 1px solid #3c3f45; border-radius: 10px; display: flex; align-items: center; padding: 0 25px 2px 21px; font-size: 15.700px; }
.expander .emoji { width: 20px; height: 20px; margin-right: 6px; }
.track { width: 7px; margin-left: 100px; flex: none; }
.thumb { display: block; height: 373px; margin-top: 246px; background: #6b6c70; border-radius: 4px; }

/* taskbar */
.taskbar { height: 50px; flex: none; display: flex; align-items: center; background: linear-gradient(90deg, #202020, #1d1d1d 70%, #262525 88%, #2a2424 94%, #202020); font-size: 14.500px; letter-spacing: -.4px; }
.win { width: 20px; height: 20px; margin-left: 20px; }
.grip { width: 4px; height: 26px; border: solid #505050; border-width: 0 1px; margin-left: 25px; }
.links { margin-left: 11px; width: 565px; padding-bottom: 2px; }
.g2 { margin-left: 0; }
.appsrow { display: flex; align-self: stretch; margin-left: 13px; }
.ti { width: 62px; height: 50px; display: flex; align-items: center; justify-content: center; position: relative; flex: none; }
.ti svg { width: 30px; height: 30px; }
.on::after { content: ""; position: absolute; left: 5px; right: 6px; bottom: 0; height: 3px; background: #76b9ed; }
.cur { background: linear-gradient(90deg, #4d4d4d 57px, #2b2b2b 57px, #2b2b2b 58px, #454545 58px); }
.cur::after { left: 0; right: 0; }
.cur svg { width: 32px; height: 32px; }
.tray { display: flex; align-items: center; margin-left: auto; align-self: stretch; }
.up { width: 18px; height: 10px; }
.bat { width: 20px; height: 14px; margin-left: 11px; }
.pen { width: 22px; height: 22px; margin-left: 14px; }
.lang { margin-left: 17px; width: 30px; padding-bottom: 1px; }
.clock { width: 74px; margin-left: 14px; display: flex; flex-direction: column; align-items: center; line-height: 23px; letter-spacing: -.3px; padding-bottom: 1px; }
.note { width: 22px; height: 22px; margin-left: 21px; }
.edge { width: 1px; align-self: stretch; background: #6e6e6e; margin: 0 5px 0 23px; }
```
